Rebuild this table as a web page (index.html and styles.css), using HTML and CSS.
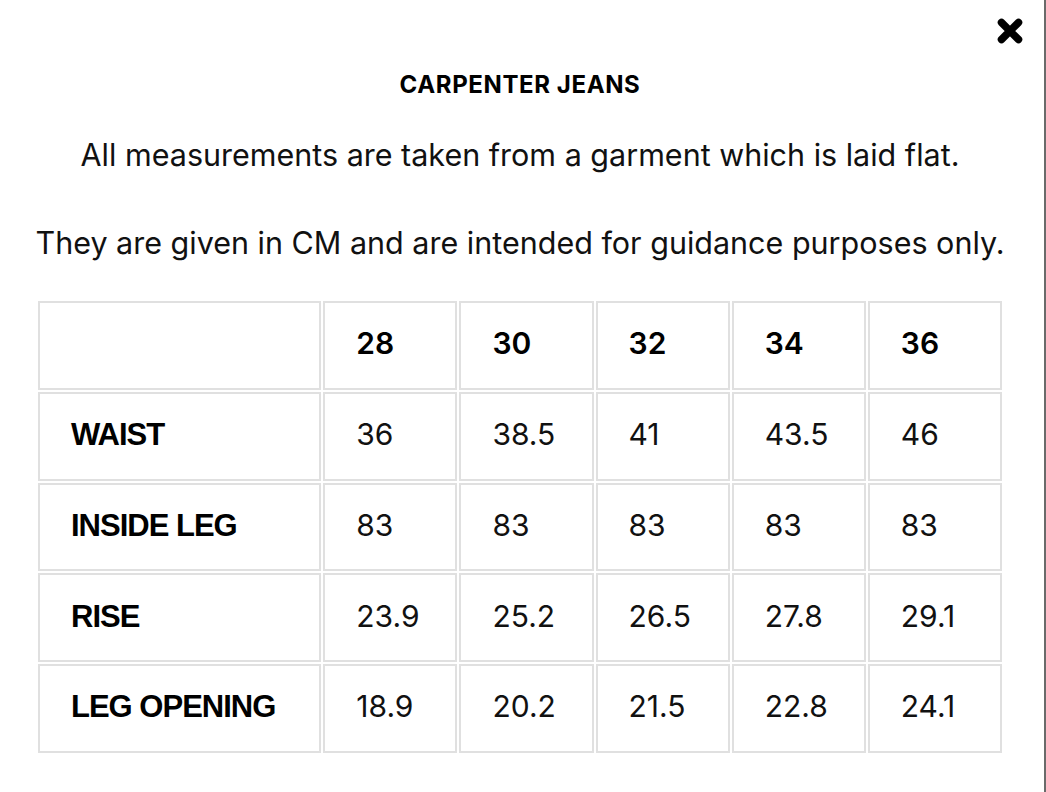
FILE: index.html
```html
<!DOCTYPE html>
<html lang="en">
<head>
<meta charset="utf-8">
<title>Carpenter Jeans – Size Guide</title>
<link rel="stylesheet" href="styles.css">
</head>
<body>
<div class="page">
  <div class="modal">
    <button class="close" aria-label="Close">
      <svg viewBox="0 0 26 26" width="26" height="26" aria-hidden="true">
        <path d="M4.5 4.5 L21.5 21.5 M21.5 4.5 L4.5 21.5" stroke="#000" stroke-width="7.5" stroke-linecap="round" fill="none"/>
      </svg>
    </button>
    <h1 class="title">CARPENTER JEANS</h1>
    <p class="note">All measurements are taken from a garment which is laid flat.</p>
    <p class="note note-second">They are given in CM and are intended for guidance purposes only.</p>
    <table class="sizes">
      <colgroup>
        <col class="col-label">
        <col class="col-size"><col class="col-size"><col class="col-size"><col class="col-size"><col class="col-size">
      </colgroup>
      <thead>
        <tr><th class="label"></th><th>28</th><th>30</th><th>32</th><th>34</th><th>36</th></tr>
      </thead>
      <tbody>
        <tr><th class="label">WAIST</th><td>36</td><td>38.5</td><td>41</td><td>43.5</td><td>46</td></tr>
        <tr><th class="label">INSIDE LEG</th><td>83</td><td>83</td><td>83</td><td>83</td><td>83</td></tr>
        <tr><th class="label">RISE</th><td>23.9</td><td>25.2</td><td>26.5</td><td>27.8</td><td>29.1</td></tr>
        <tr><th class="label">LEG OPENING</th><td>18.9</td><td>20.2</td><td>21.5</td><td>22.8</td><td>24.1</td></tr>
      </tbody>
    </table>
  </div>
</div>
</body>
</html>
```

FILE: styles.css
```css
* { box-sizing: border-box; }

html, body {
  margin: 0;
  padding: 0;
  background: #fff;
}

body {
  font-family: Inter, "Noto Sans", "Liberation Sans", sans-serif;
  color: #000;
}

.page {
  width: 1046px;
  height: 792px;
  border-right: 2px solid #6a6a6a;
  overflow: hidden;
}

.modal {
  position: relative;
  width: 1040px;
  padding-top: 70px;
  display: flex;
  flex-direction: column;
  align-items: center;
}

.close {
  position: absolute;
  top: 18px;
  left: 997px;
  width: 26px;
  height: 26px;
  padding: 0;
  border: 0;
  background: none;
  cursor: pointer;
}

.close svg { display: block; }

.title {
  margin: 0;
  font-size: 24px;
  line-height: 30px;
  font-weight: 700;
  letter-spacing: 0.6px;
}

.note {
  margin: 37px 0 0;
  font-size: 30.5px;
  line-height: 36px;
  font-weight: 400;
  color: #111;
}

.note-second {
  margin-top: 52px;
}

.sizes {
  margin-top: 38px;
  width: 968px;
  table-layout: fixed;
  border-collapse: separate;
  border-spacing: 2px;
}

.col-label { width: 283px; }
.col-size { width: 134px; }

.sizes th,
.sizes td {
  height: 88.75px;
  padding: 0 0 4px 31px;
  border: 2px solid #e0e0e0;
  text-align: left;
  vertical-align: middle;
  font-size: 30px;
  font-weight: 400;
  color: #111;
}

.sizes thead th {
  font-weight: 600;
  color: #000;
}

.sizes th.label {
  padding-bottom: 2px;
  font-family: "Liberation Sans", Arial, sans-serif;
  font-weight: 700;
  font-size: 31px;
  letter-spacing: -1px;
  color: #000;
}
```
